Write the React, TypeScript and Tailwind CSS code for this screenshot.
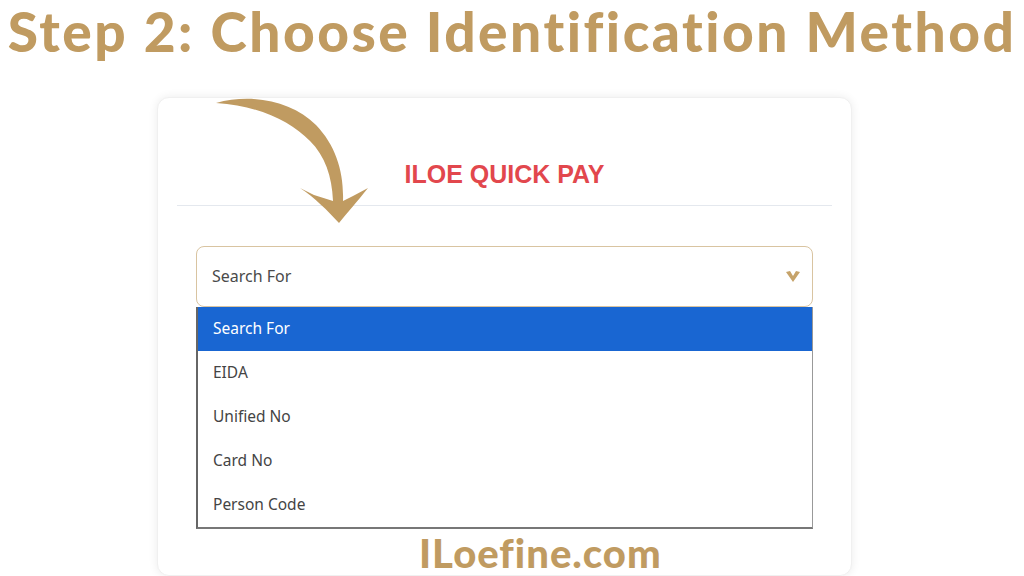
import React from 'react';

const options = ['Search For', 'EIDA', 'Unified No', 'Card No', 'Person Code'];

const CurvedArrow = () => (
  <svg
    className="absolute left-[42px] top-[-3px]"
    width="180"
    height="135"
    viewBox="200 95 180 135"
    fill="#c09b61"
  >
    <path d="M216 103 C252 93 292 101 316 125 C336 146 344 172 343 201 L353 196 L368 188 C357 202 347 213 339 223 C327 210 315 198 300 188 L314 195 L333 201 C332 176 325 156 310 141 C290 121 260 106 216 103 Z" />
  </svg>
);

const Chevron = () => (
  <svg width="16" height="13" viewBox="0 0 16 13">
    <path d="M1 2 L5 1 L8 6 L11 1 L15 2 L8 12 Z" fill="#c6a36a" />
  </svg>
);

const App = () => {
  return (
    <div className="w-[1024px] h-[576px] bg-white overflow-hidden flex flex-col" style={{ fontFamily: "'Noto Sans', sans-serif" }}>
      <h1
        className="h-[97px] text-center text-[55px] leading-[62px] font-black text-[#c09b61] whitespace-nowrap tracking-[2.5px]"
        style={{ fontFamily: "Lato, sans-serif" }}
      >
        Step 2: Choose Identification Method
      </h1>

      <div className="relative w-[695px] h-[480px] ml-[157px] bg-white rounded-[12px] shadow-[0_0_10px_rgba(0,0,0,0.08)] border border-[#f0f0f0] flex flex-col">
        <CurvedArrow />

        <div className="h-[107px] flex items-end justify-center pb-[16px]">
          <h2
            className="text-[25px] leading-[30px] font-bold text-[#e2474d]"
            style={{ fontFamily: "'Liberation Sans', Arial, sans-serif" }}
          >
            ILOE QUICK PAY
          </h2>
        </div>
        <div className="mx-[19px] border-t border-[#e4e8ee]" />

        <div className="mt-[40px] mx-[38px] h-[61px] rounded-[8px] border border-[#d9c4a1] flex items-center justify-between pl-[15px] pr-[11px]">
          <span className="text-[16px] text-[#4a4a4a]">Search For</span>
          <Chevron />
        </div>

        <ul className="ml-[38px] mr-[38px] border-l-2 border-b-2 border-r border-l-[#666] border-b-[#777] border-r-[#999] flex flex-col">
          {options.map((opt, i) => (
            <li
              key={opt}
              className={
                i === 0
                  ? 'h-[44px] flex items-center pl-[15px] text-[15.5px] bg-[#1966d2] text-white'
                  : 'h-[44px] flex items-center pl-[15px] text-[15.5px] text-[#444]'
              }
            >
              {opt}
            </li>
          ))}
        </ul>

        <div
          className="mt-[2px] pl-[261px] text-[40px] leading-[44px] font-black text-[#c09b61] tracking-[1px]"
          style={{ fontFamily: "Lato, sans-serif" }}
        >
          ILoefine.com
        </div>
      </div>
    </div>
  );
};

export default App;
